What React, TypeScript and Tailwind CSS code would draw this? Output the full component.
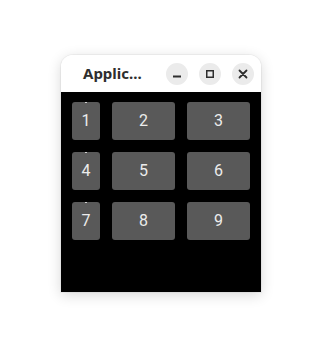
export default function App() {
  const rows = [
    ["1", "2", "3"],
    ["4", "5", "6"],
    ["7", "8", "9"],
  ];

  return (
    <div className="min-h-[359px] w-[322px] bg-white pl-[61px] pt-[55px]">
      <div className="flex h-[237px] w-[200px] flex-col overflow-hidden rounded-t-[12px] shadow-[0_0_0_1px_rgba(0,0,0,0.04),0_3px_14px_rgba(0,0,0,0.16)]">
        <div className="flex h-[37px] shrink-0 items-center bg-white pl-[22px] pr-[7px]">
          <span
            className="flex-1 text-[15px] font-bold text-[#2e2e2e]"
            style={{ fontFamily: '"Noto Sans", sans-serif' }}
          >
            Applic...
          </span>
          <div className="flex items-center gap-[11px]">
            <button className="flex h-[22px] w-[22px] items-center justify-center rounded-full bg-[#ebebeb]">
              <svg width="10" height="10" viewBox="0 0 10 10">
                <rect x="1" y="6.5" width="8" height="2" fill="#2e2e2e" />
              </svg>
            </button>
            <button className="flex h-[22px] w-[22px] items-center justify-center rounded-full bg-[#ebebeb]">
              <svg width="10" height="10" viewBox="0 0 10 10">
                <rect x="1.75" y="1.75" width="6.5" height="6.5" fill="none" stroke="#2e2e2e" strokeWidth="1.5" />
              </svg>
            </button>
            <button className="flex h-[22px] w-[22px] items-center justify-center rounded-full bg-[#ebebeb]">
              <svg width="10" height="10" viewBox="0 0 10 10">
                <path d="M1.5 1.5 L8.5 8.5 M8.5 1.5 L1.5 8.5" stroke="#2e2e2e" strokeWidth="1.8" strokeLinecap="round" />
              </svg>
            </button>
          </div>
        </div>
        <div className="flex flex-1 flex-col gap-[12px] bg-black px-[11px] pt-[10px]">
          {rows.map((row) => (
            <div key={row[0]} className="grid grid-cols-[28px_63px_63px] gap-[12px]">
              {row.map((n, i) => (
                <button
                  key={n}
                  className="relative flex h-[38px] items-center justify-center rounded-[3px] bg-[#595959] text-[16px] text-[#ececec]"
                  style={{ fontFamily: "Roboto, sans-serif" }}
                >
                  {i === 0 && (
                    <span className="absolute left-1/2 top-0 h-px w-[2px] -translate-x-1/2 bg-[#d0d0d0]" />
                  )}
                  {n}
                </button>
              ))}
            </div>
          ))}
        </div>
      </div>
    </div>
  );
}
